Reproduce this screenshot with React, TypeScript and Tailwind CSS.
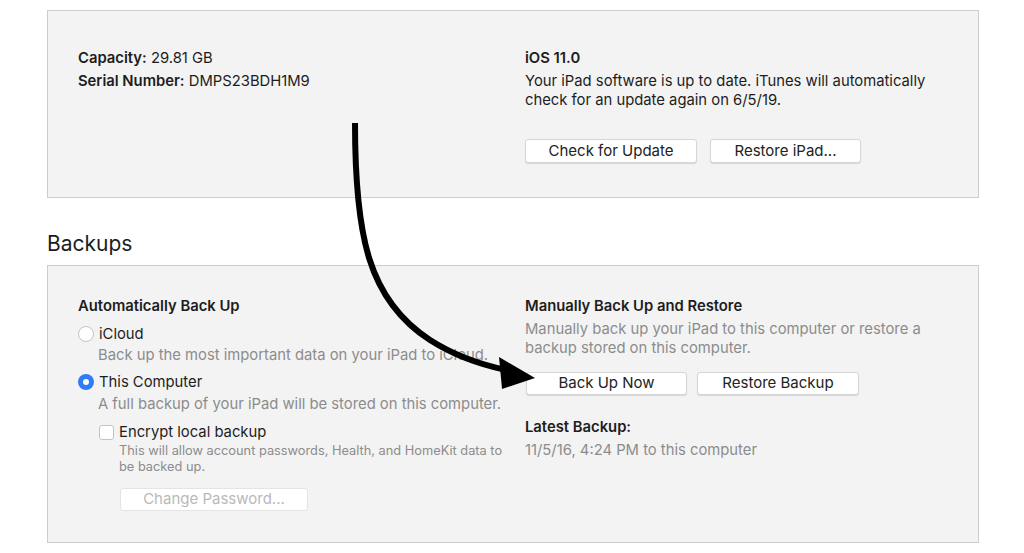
import React from 'react';

const font = { fontFamily: 'Inter, "Noto Sans", sans-serif' };

const Button = ({ label, className = '', disabled = false }: { label: string; className?: string; disabled?: boolean }) => (
  <div
    className={`flex items-center justify-center rounded-[3px] border bg-white text-[15px] shadow-[0_1px_1px_rgba(0,0,0,0.12)] ${
      disabled ? 'border-[#e4e4e4] text-[#b9b9b9] shadow-none' : 'border-[#d6d6d6] text-[#222]'
    } ${className}`}
  >
    {label}
  </div>
);

const Radio = ({ checked }: { checked?: boolean }) =>
  checked ? (
    <span className="flex h-[16px] w-[16px] items-center justify-center rounded-full bg-[#2f7df6]">
      <span className="h-[6px] w-[6px] rounded-full bg-white" />
    </span>
  ) : (
    <span className="h-[16px] w-[16px] rounded-full border border-[#c4c4c4] bg-white" />
  );

const Arrow = () => (
  <svg className="pointer-events-none absolute left-0 top-0" width="1024" height="553" viewBox="0 0 1024 553">
    <path
      d="M355 123 C 355 235 368 300 430 340 C 455 356 478 364 506 370"
      fill="none"
      stroke="#000"
      strokeWidth="6"
    />
    <path d="M499 357 L535 378 L502 389 Z" fill="#000" />
  </svg>
);

export default function App() {
  return (
    <div className="relative h-[553px] w-[1024px] overflow-hidden bg-white text-[#1d1d1d]" style={font}>
      <div className="pl-[47px] pr-[45px] pt-[10px]">
        {/* device summary */}
        <section className="flex h-[188px] border border-[#cdcdcd] bg-[#f3f3f3] pl-[30px] pt-[37px]">
          <div className="w-[447px] text-[14.8px] leading-[20px]">
            <div>
              <span className="font-semibold">Capacity:</span> 29.81 GB
            </div>
            <div className="mt-[3px]">
              <span className="font-semibold">Serial Number:</span> DMPS23BDH1M9
            </div>
          </div>
          <div className="flex-1">
            <div className="text-[14.8px] font-semibold leading-[20px]">iOS 11.0</div>
            <div className="mt-[4px] w-[420px] text-[14.8px] leading-[19px]">
              Your iPad software is up to date. iTunes will automatically check for an update again on 6/5/19.
            </div>
            <div className="mt-[29px] flex gap-[13px]">
              <Button label="Check for Update" className="h-[24px] w-[172px]" />
              <Button label="Restore iPad..." className="h-[24px] w-[151px]" />
            </div>
          </div>
        </section>

        <h2 className="mt-[33px] text-[21px] leading-[26px]">Backups</h2>

        {/* backups */}
        <section className="mt-[8px] flex h-[278px] border border-[#cdcdcd] bg-[#f3f3f3] pl-[30px] pt-[30px]">
          <div className="w-[447px] text-[14.8px]">
            <div className="font-semibold leading-[20px]">Automatically Back Up</div>
            <div className="mt-[8px] flex items-center gap-[5px] leading-[20px]">
              <Radio />
              <span>iCloud</span>
            </div>
            <div className="mt-[1px] pl-[20px] leading-[20px] text-[#8c8c8c]">
              Back up the most important data on your iPad to iCloud.
            </div>
            <div className="mt-[7px] flex items-center gap-[5px] leading-[20px]">
              <Radio checked />
              <span>This Computer</span>
            </div>
            <div className="mt-[2px] pl-[20px] leading-[20px] text-[#8c8c8c]">
              A full backup of your iPad will be stored on this computer.
            </div>
            <div className="mt-[8px] flex items-center gap-[5px] pl-[21px] leading-[20px]">
              <span className="h-[15px] w-[15px] rounded-[3px] border border-[#c4c4c4] bg-white" />
              <span>Encrypt local backup</span>
            </div>
            <div className="mt-[1px] w-[440px] pl-[41px] text-[12.8px] leading-[16px] text-[#8c8c8c]">
              This will allow account passwords, Health, and HomeKit data to be backed up.
            </div>
            <div className="mt-[13px] pl-[42px]">
              <Button label="Change Password..." disabled className="h-[23px] w-[188px]" />
            </div>
          </div>

          <div className="flex-1 text-[14.8px]">
            <div className="font-semibold leading-[20px]">Manually Back Up and Restore</div>
            <div className="mt-[4px] w-[420px] leading-[19px] text-[#8c8c8c]">
              Manually back up your iPad to this computer or restore a backup stored on this computer.
            </div>
            <div className="mt-[14px] flex gap-[10px] pl-[1px]">
              <Button label="Back Up Now" className="h-[23px] w-[161px]" />
              <Button label="Restore Backup" className="h-[23px] w-[162px]" />
            </div>
            <div className="mt-[22px] font-semibold leading-[20px]">Latest Backup:</div>
            <div className="mt-[3px] leading-[20px] text-[#8c8c8c]">11/5/16, 4:24 PM to this computer</div>
          </div>
        </section>
      </div>
      <Arrow />
    </div>
  );
}
